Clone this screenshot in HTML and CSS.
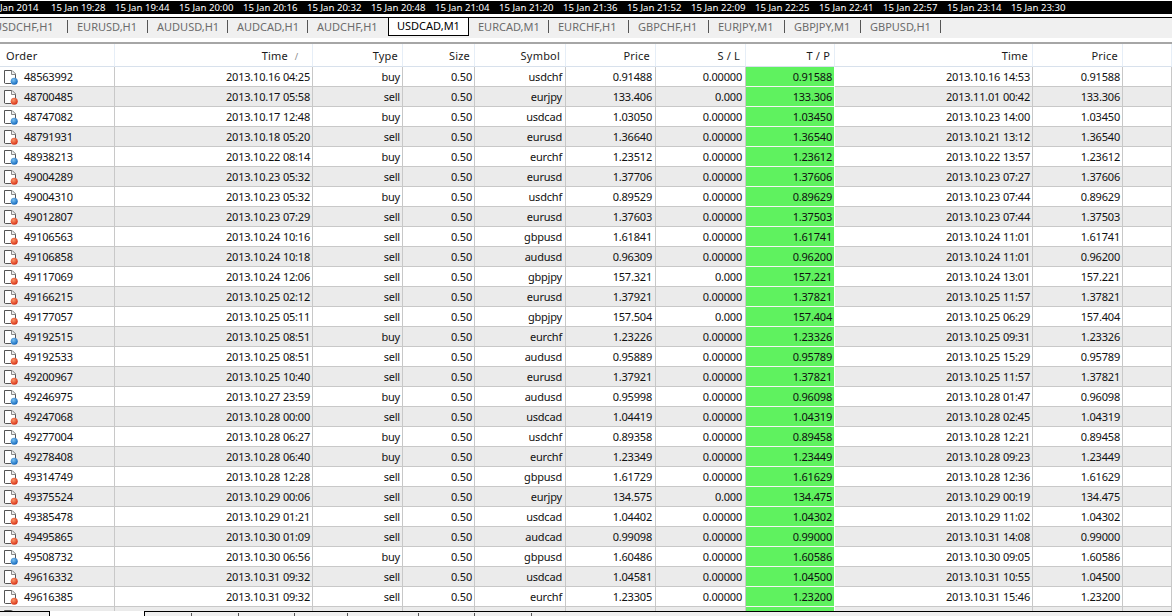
FILE: index.html
```html
<!DOCTYPE html>
<html lang="en">
<head>
  <meta charset="UTF-8">
  <title>Account History</title>
  <link rel="stylesheet" href="styles.css">
</head>
<body>
  <svg class="defs" width="0" height="0">
    <symbol id="doc" viewBox="0 0 16 16">
      <path d="M3 2h7l3 3v6l-4 3H3z" fill="#fff"/>
      <path d="M2.5 1.5h7.5l3.5 3.5v5M2.5 1.5v12.5l1 .5H9" fill="none" stroke="#555"/>
      <path d="M9.5 1.5v4h4" fill="#eee" stroke="#888"/>
    </symbol>
    <radialGradient id="blue" cx=".4" cy=".35" r=".7"><stop offset="0" stop-color="#7cc4f4"/><stop offset="1" stop-color="#0d62b8"/></radialGradient>
    <radialGradient id="red" cx=".4" cy=".35" r=".7"><stop offset="0" stop-color="#fb9a6c"/><stop offset="1" stop-color="#d62a10"/></radialGradient>
    <symbol id="buy" viewBox="0 0 16 16">
      <use href="#doc"/>
      <circle cx="12.2" cy="12.2" r="3.5" fill="url(#blue)"/>
    </symbol>
    <symbol id="sell" viewBox="0 0 16 16">
      <use href="#doc"/>
      <circle cx="12.2" cy="12.2" r="3.5" fill="url(#red)"/>
    </symbol>
  </svg>

  <div class="timescale">
    <span class="first">Jan 2014</span>
    <span>15 Jan 19:28</span><span>15 Jan 19:44</span><span>15 Jan 20:00</span><span>15 Jan 20:16</span>
    <span>15 Jan 20:32</span><span>15 Jan 20:48</span><span>15 Jan 21:04</span><span>15 Jan 21:20</span>
    <span>15 Jan 21:36</span><span>15 Jan 21:52</span><span>15 Jan 22:09</span><span>15 Jan 22:25</span>
    <span>15 Jan 22:41</span><span>15 Jan 22:57</span><span>15 Jan 23:14</span><span>15 Jan 23:30</span>
  </div>

  <div class="charttabs">
    <a class="tab clipped">USDCHF,H1</a>
    <a class="tab">EURUSD,H1</a>
    <a class="tab">AUDUSD,H1</a>
    <a class="tab">AUDCAD,H1</a>
    <a class="tab nosep">AUDCHF,H1</a>
    <a class="tab active">USDCAD,M1</a>
    <a class="tab">EURCAD,M1</a>
    <a class="tab">EURCHF,H1</a>
    <a class="tab">GBPCHF,H1</a>
    <a class="tab narrow">EURJPY,M1</a>
    <a class="tab narrow">GBPJPY,M1</a>
    <a class="tab">GBPUSD,H1</a>
  </div>

  <div class="history">
    <table>
      <colgroup>
        <col class="c-order"><col class="c-time"><col class="c-type"><col class="c-size"><col class="c-symbol"><col class="c-num"><col class="c-num"><col class="c-tp"><col class="c-close"><col class="c-num"><col>
      </colgroup>
      <thead>
        <tr>
          <th class="left">Order</th><th class="sorted">Time<i>/</i></th><th>Type</th><th>Size</th><th>Symbol</th><th>Price</th><th>S / L</th><th>T / P</th><th>Time</th><th>Price</th><th></th>
        </tr>
      </thead>
      <tbody>
        <tr><td class="left"><svg class="ico"><use href="#buy"/></svg>48563992</td><td>2013.10.16 04:25</td><td>buy</td><td>0.50</td><td>usdchf</td><td>0.91488</td><td>0.00000</td><td class="tp">0.91588</td><td>2013.10.16 14:53</td><td>0.91588</td><td></td></tr>
        <tr><td class="left"><svg class="ico"><use href="#sell"/></svg>48700485</td><td>2013.10.17 05:58</td><td>sell</td><td>0.50</td><td>eurjpy</td><td>133.406</td><td>0.000</td><td class="tp">133.306</td><td>2013.11.01 00:42</td><td>133.306</td><td></td></tr>
        <tr><td class="left"><svg class="ico"><use href="#buy"/></svg>48747082</td><td>2013.10.17 12:48</td><td>buy</td><td>0.50</td><td>usdcad</td><td>1.03050</td><td>0.00000</td><td class="tp">1.03450</td><td>2013.10.23 14:00</td><td>1.03450</td><td></td></tr>
        <tr><td class="left"><svg class="ico"><use href="#sell"/></svg>48791931</td><td>2013.10.18 05:20</td><td>sell</td><td>0.50</td><td>eurusd</td><td>1.36640</td><td>0.00000</td><td class="tp">1.36540</td><td>2013.10.21 13:12</td><td>1.36540</td><td></td></tr>
        <tr><td class="left"><svg class="ico"><use href="#buy"/></svg>48938213</td><td>2013.10.22 08:14</td><td>buy</td><td>0.50</td><td>eurchf</td><td>1.23512</td><td>0.00000</td><td class="tp">1.23612</td><td>2013.10.22 13:57</td><td>1.23612</td><td></td></tr>
        <tr><td class="left"><svg class="ico"><use href="#sell"/></svg>49004289</td><td>2013.10.23 05:32</td><td>sell</td><td>0.50</td><td>eurusd</td><td>1.37706</td><td>0.00000</td><td class="tp">1.37606</td><td>2013.10.23 07:27</td><td>1.37606</td><td></td></tr>
        <tr><td class="left"><svg class="ico"><use href="#buy"/></svg>49004310</td><td>2013.10.23 05:32</td><td>buy</td><td>0.50</td><td>usdchf</td><td>0.89529</td><td>0.00000</td><td class="tp">0.89629</td><td>2013.10.23 07:44</td><td>0.89629</td><td></td></tr>
        <tr><td class="left"><svg class="ico"><use href="#sell"/></svg>49012807</td><td>2013.10.23 07:29</td><td>sell</td><td>0.50</td><td>eurusd</td><td>1.37603</td><td>0.00000</td><td class="tp">1.37503</td><td>2013.10.23 07:44</td><td>1.37503</td><td></td></tr>
        <tr><td class="left"><svg class="ico"><use href="#sell"/></svg>49106563</td><td>2013.10.24 10:16</td><td>sell</td><td>0.50</td><td>gbpusd</td><td>1.61841</td><td>0.00000</td><td class="tp">1.61741</td><td>2013.10.24 11:01</td><td>1.61741</td><td></td></tr>
        <tr><td class="left"><svg class="ico"><use href="#sell"/></svg>49106858</td><td>2013.10.24 10:18</td><td>sell</td><td>0.50</td><td>audusd</td><td>0.96309</td><td>0.00000</td><td class="tp">0.96200</td><td>2013.10.24 11:01</td><td>0.96200</td><td></td></tr>
        <tr><td class="left"><svg class="ico"><use href="#sell"/></svg>49117069</td><td>2013.10.24 12:06</td><td>sell</td><td>0.50</td><td>gbpjpy</td><td>157.321</td><td>0.000</td><td class="tp">157.221</td><td>2013.10.24 13:01</td><td>157.221</td><td></td></tr>
        <tr><td class="left"><svg class="ico"><use href="#sell"/></svg>49166215</td><td>2013.10.25 02:12</td><td>sell</td><td>0.50</td><td>eurusd</td><td>1.37921</td><td>0.00000</td><td class="tp">1.37821</td><td>2013.10.25 11:57</td><td>1.37821</td><td></td></tr>
        <tr><td class="left"><svg class="ico"><use href="#sell"/></svg>49177057</td><td>2013.10.25 05:11</td><td>sell</td><td>0.50</td><td>gbpjpy</td><td>157.504</td><td>0.000</td><td class="tp">157.404</td><td>2013.10.25 06:29</td><td>157.404</td><td></td></tr>
        <tr><td class="left"><svg class="ico"><use href="#buy"/></svg>49192515</td><td>2013.10.25 08:51</td><td>buy</td><td>0.50</td><td>eurchf</td><td>1.23226</td><td>0.00000</td><td class="tp">1.23326</td><td>2013.10.25 09:31</td><td>1.23326</td><td></td></tr>
        <tr><td class="left"><svg class="ico"><use href="#sell"/></svg>49192533</td><td>2013.10.25 08:51</td><td>sell</td><td>0.50</td><td>audusd</td><td>0.95889</td><td>0.00000</td><td class="tp">0.95789</td><td>2013.10.25 15:29</td><td>0.95789</td><td></td></tr>
        <tr><td class="left"><svg class="ico"><use href="#sell"/></svg>49200967</td><td>2013.10.25 10:40</td><td>sell</td><td>0.50</td><td>eurusd</td><td>1.37921</td><td>0.00000</td><td class="tp">1.37821</td><td>2013.10.25 11:57</td><td>1.37821</td><td></td></tr>
        <tr><td class="left"><svg class="ico"><use href="#buy"/></svg>49246975</td><td>2013.10.27 23:59</td><td>buy</td><td>0.50</td><td>audusd</td><td>0.95998</td><td>0.00000</td><td class="tp">0.96098</td><td>2013.10.28 01:47</td><td>0.96098</td><td></td></tr>
        <tr><td class="left"><svg class="ico"><use href="#sell"/></svg>49247068</td><td>2013.10.28 00:00</td><td>sell</td><td>0.50</td><td>usdcad</td><td>1.04419</td><td>0.00000</td><td class="tp">1.04319</td><td>2013.10.28 02:45</td><td>1.04319</td><td></td></tr>
        <tr><td class="left"><svg class="ico"><use href="#buy"/></svg>49277004</td><td>2013.10.28 06:27</td><td>buy</td><td>0.50</td><td>usdchf</td><td>0.89358</td><td>0.00000</td><td class="tp">0.89458</td><td>2013.10.28 12:21</td><td>0.89458</td><td></td></tr>
        <tr><td class="left"><svg class="ico"><use href="#buy"/></svg>49278408</td><td>2013.10.28 06:40</td><td>buy</td><td>0.50</td><td>eurchf</td><td>1.23349</td><td>0.00000</td><td class="tp">1.23449</td><td>2013.10.28 09:23</td><td>1.23449</td><td></td></tr>
        <tr><td class="left"><svg class="ico"><use href="#sell"/></svg>49314749</td><td>2013.10.28 12:28</td><td>sell</td><td>0.50</td><td>gbpusd</td><td>1.61729</td><td>0.00000</td><td class="tp">1.61629</td><td>2013.10.28 12:36</td><td>1.61629</td><td></td></tr>
        <tr><td class="left"><svg class="ico"><use href="#sell"/></svg>49375524</td><td>2013.10.29 00:06</td><td>sell</td><td>0.50</td><td>eurjpy</td><td>134.575</td><td>0.000</td><td class="tp">134.475</td><td>2013.10.29 00:19</td><td>134.475</td><td></td></tr>
        <tr><td class="left"><svg class="ico"><use href="#sell"/></svg>49385478</td><td>2013.10.29 01:21</td><td>sell</td><td>0.50</td><td>usdcad</td><td>1.04402</td><td>0.00000</td><td class="tp">1.04302</td><td>2013.10.29 11:02</td><td>1.04302</td><td></td></tr>
        <tr><td class="left"><svg class="ico"><use href="#sell"/></svg>49495865</td><td>2013.10.30 01:09</td><td>sell</td><td>0.50</td><td>audcad</td><td>0.99098</td><td>0.00000</td><td class="tp">0.99000</td><td>2013.10.31 14:08</td><td>0.99000</td><td></td></tr>
        <tr><td class="left"><svg class="ico"><use href="#buy"/></svg>49508732</td><td>2013.10.30 06:56</td><td>buy</td><td>0.50</td><td>gbpusd</td><td>1.60486</td><td>0.00000</td><td class="tp">1.60586</td><td>2013.10.30 09:05</td><td>1.60586</td><td></td></tr>
        <tr><td class="left"><svg class="ico"><use href="#sell"/></svg>49616332</td><td>2013.10.31 09:32</td><td>sell</td><td>0.50</td><td>usdcad</td><td>1.04581</td><td>0.00000</td><td class="tp">1.04500</td><td>2013.10.31 10:55</td><td>1.04500</td><td></td></tr>
        <tr><td class="left"><svg class="ico"><use href="#sell"/></svg>49616385</td><td>2013.10.31 09:32</td><td>sell</td><td>0.50</td><td>eurchf</td><td>1.23305</td><td>0.00000</td><td class="tp">1.23200</td><td>2013.10.31 15:46</td><td>1.23200</td><td></td></tr>
        <tr><td class="left"><svg class="ico"><use href="#sell"/></svg></td><td></td><td></td><td></td><td></td><td></td><td></td><td class="tp"></td><td></td><td></td><td></td></tr>
      </tbody>
    </table>
  </div>

  <div class="bottomtabs">
    <span class="bt plain"></span>
    <span class="bt current"></span>
    <span class="bt w47"></span><span class="bt w47"></span><span class="bt w56"></span><span class="bt w53"></span><span class="bt w71"></span><span class="bt w56"></span><span class="bt w57"></span>
  </div>
</body>
</html>
```

FILE: styles.css
```css
html,body{margin:0;padding:0;height:616px;overflow:hidden;background:#fff}
body{font-family:"Noto Sans",Tahoma,sans-serif;font-size:11px;color:#101010}
.defs{display:block;height:0}

/* time scale of the chart above */
.timescale{display:flex;height:13px;margin-top:1px;background:#000;color:#fff;font-size:9.6px;line-height:13px;white-space:nowrap;overflow:hidden}
.timescale span{flex:0 0 64px}
.timescale .first{flex:0 0 51px}

/* chart tabs */
.charttabs{display:flex;height:20px;margin-top:3px;margin-bottom:4px;border-top:1px solid #000;background:#f0f0f0;color:#6c6c6c;font-size:11px;overflow:hidden}
.tab{flex:0 0 80px;box-sizing:border-box;height:13px;margin-top:2px;padding-left:9px;line-height:13px;border-right:1px solid #555;white-space:nowrap}
.tab.clipped{flex:0 0 68px;padding-left:0;text-indent:-6px;overflow:hidden}
.tab.nosep{border-right:0}
.tab.narrow{flex:0 0 76px}
.tab.active{height:18px;margin-top:0;flex:0 0 81px;background:#fff;color:#000;border:1px solid #000;border-top:0;line-height:16px;padding-left:8px}

/* history table */
.history{height:567px;overflow:hidden;border-top:2px solid #a6a6a6}
table{border-collapse:separate;border-spacing:0;table-layout:fixed;width:1172px}
.c-order{width:115px}
.c-time{width:198px}
.c-type{width:90px}
.c-size{width:72px}
.c-symbol{width:91px}
.c-num{width:90px}
.c-tp{width:89px}
.c-close{width:198px}

th{height:22px;padding:0 4px 0 0;text-align:right;font-weight:normal;letter-spacing:.2px;background:#fff;border-right:1px solid #e6eef7;border-bottom:1px solid #d8e1ec;color:#1a1a1a}
th.left{text-align:left;padding-left:6px}
th.sorted{padding-right:7px}
th i{display:inline-block;width:17px;font-style:normal;color:#888;font-size:9px;text-align:center}
td{height:19px;padding:0 2px 0 0;text-align:right;white-space:nowrap;letter-spacing:-.2px;line-height:19px;border-right:1px solid #c8c8c8;border-bottom:1px solid #c8c8c8}
td.left{text-align:left;padding-left:2px}
/* symbol, price, s/l sit one pixel further from their edge */
td:nth-child(n+5):nth-child(-n+7){padding-right:3px}
th:nth-child(n+5):nth-child(-n+7){padding-right:5px}
tbody tr:nth-child(even) td{background:#ebebeb}
td.tp,tbody tr:nth-child(even) td.tp{background:#5ff25f;border-right-color:#fff;border-bottom-color:#f4f4f4}
.ico{width:16px;height:16px;margin:2px 6px 0 0;vertical-align:top}

/* terminal tabs at the bottom */
.bottomtabs{display:flex;height:4px;background:#f0f0f0;border-top:1px solid #000}
.bt{flex:0 0 auto;height:4px;box-sizing:border-box;margin-top:1px;border-right:1px solid #555}
.bt.plain{width:49px;margin-top:0;border-right:0}
.bt.current{width:96px;margin-top:-1px;height:5px;background:#fff;border-left:1px solid #000;border-right:1px solid #000}
.w47{width:47px}
.w56{width:56px}
.w53{width:53px}
.w71{width:71px}
.w57{width:57px}
```
